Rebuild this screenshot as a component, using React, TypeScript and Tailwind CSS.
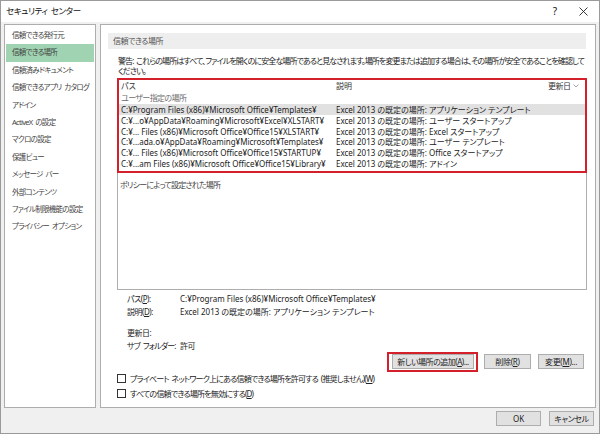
const sideItems = [
  "信頼できる発行元",
  "信頼できる場所",
  "信頼済みドキュメント",
  "信頼できるアプリ カタログ",
  "アドイン",
  "ActiveX の設定",
  "マクロの設定",
  "保護ビュー",
  "メッセージ バー",
  "外部コンテンツ",
  "ファイル制限機能の設定",
  "プライバシー オプション",
];

const rows = [
  ["C:¥Program Files (x86)¥Microsoft Office¥Templates¥", "Excel 2013 の既定の場所: アプリケーション テンプレート"],
  ["C:¥...o¥AppData¥Roaming¥Microsoft¥Excel¥XLSTART¥", "Excel 2013 の既定の場所: ユーザー スタートアップ"],
  ["C:¥... Files (x86)¥Microsoft Office¥Office15¥XLSTART¥", "Excel 2013 の既定の場所: Excel スタートアップ"],
  ["C:¥...ada.o¥AppData¥Roaming¥Microsoft¥Templates¥", "Excel 2013 の既定の場所: ユーザー テンプレート"],
  ["C:¥... Files (x86)¥Microsoft Office¥Office15¥STARTUP¥", "Excel 2013 の既定の場所: Office スタートアップ"],
  ["C:¥...am Files (x86)¥Microsoft Office¥Office15¥Library¥", "Excel 2013 の既定の場所: アドイン"],
];

function Btn({ children, className }: { children: React.ReactNode; className?: string }) {
  return (
    <div
      className={
        "h-[15px] shrink-0 flex items-center justify-center bg-[#e1e1e1] border border-[#adadad] text-[8px] leading-none whitespace-nowrap text-[#222] " +
        (className ?? "")
      }
    >
      {children}
    </div>
  );
}

function Check({ children }: { children: React.ReactNode }) {
  return (
    <div className="h-[15px] flex items-center gap-[4px] whitespace-nowrap">
      <div className="w-[9px] h-[9px] shrink-0 bg-white border border-[#333]" />
      <span className="tracking-[-0.8px] [word-spacing:1.5px]">{children}</span>
    </div>
  );
}

export default function App() {
  return (
    <div className="w-[600px] h-[434px] bg-[#f0f0f0] border border-[#9a9a9a] flex flex-col overflow-hidden text-[8px] text-[#333] font-['Noto_Sans','Noto_Sans_CJK_JP',sans-serif] [font-feature-settings:'palt']">
      {/* title bar */}
      <div className="h-[21px] shrink-0 bg-white flex items-center pl-[5px] pr-[10px] text-[#111]">
        <span className="text-[8.5px] tracking-[-0.4px] [word-spacing:1.5px]">セキュリティ センター</span>
        <span className="ml-auto text-[10px] mr-[22px]">?</span>
        <svg width="9" height="9" viewBox="0 0 9 9" className="mr-[1px]">
          <path d="M0.5 0.5 L8.5 8.5 M8.5 0.5 L0.5 8.5" stroke="#222" strokeWidth="0.9" />
        </svg>
      </div>

      <div className="flex gap-[4px] px-[3px] pt-[2px] shrink-0">
        {/* sidebar */}
        <div className="w-[92px] h-[384px] bg-white border border-[#adadad] p-[1px] pt-[2px]">
          {sideItems.map((s, i) => (
            <div
              key={s}
              className={
                "h-[17.4px] flex items-center pl-[6px] whitespace-nowrap text-[7.5px] tracking-[-0.7px] [word-spacing:1.5px] text-[#444] " +
                (i === 1 ? "bg-[#9fd3b1]" : "")
              }
            >
              {s}
            </div>
          ))}
        </div>

        {/* main panel */}
        <div className="w-[496px] h-[384px] bg-white border border-[#adadad] pt-[8px] pl-[7px] pr-[9px] flex flex-col">
          <div className="h-[16px] shrink-0 bg-[#eeeeee] flex items-center pl-[5px] tracking-[-0.5px] text-[#555]">
            信頼できる場所
          </div>

          <div className="mt-[7px] ml-[10px] shrink-0 leading-[10px] tracking-[-0.9px] [word-spacing:1.5px] text-[#222]">
            <div className="whitespace-nowrap">
              警告: これらの場所はすべて、ファイルを開くのに安全な場所であると見なされます。場所を変更または追加する場合は、その場所が安全であることを確認して
            </div>
            <div>ください。</div>
          </div>

          {/* list */}
          <div className="relative shrink-0 mt-[2px] ml-[9px] w-[470px] h-[212px] border border-[#adadad] bg-white">
            <div className="grid grid-cols-[215px_212px_1fr] h-[13px] items-center text-[#333]">
              <span className="pl-[3px]">パス</span>
              <span className="pl-[3px]">説明</span>
              <span className="pl-[3px] flex items-center tracking-[-0.5px]">
                更新日
                <svg width="6" height="4" viewBox="0 0 6 4" className="ml-auto mr-[7px]">
                  <path d="M0.5 0.5 L3 3 L5.5 0.5" fill="none" stroke="#9a9a9a" strokeWidth="0.9" />
                </svg>
              </span>
            </div>
            <div className="h-[12px] flex items-center pl-[3px] tracking-[-0.6px] text-[#6e6e6e]">ユーザー指定の場所</div>
            {rows.map(([p, d], i) => (
              <div
                key={p}
                className={
                  "grid grid-cols-[215px_212px_1fr] h-[10.8px] items-center whitespace-nowrap text-[#222] " +
                  (i === 0 ? "bg-[#e1e1e1]" : "")
                }
              >
                <span className="pl-[3px]">{p}</span>
                <span className="pl-[3px]">{d}</span>
                <span />
              </div>
            ))}
            <div className="mt-[11px] pl-[2px] leading-[10px] tracking-[-0.8px] text-[#444]">
              ポリシーによって設定された場所
            </div>

            <div className="absolute left-[-1px] top-[-1px] right-[-1px] h-[95px] border-2 border-[#d4202b]" />
          </div>

          {/* details */}
          <div className="shrink-0 ml-[19px] mt-[2px] leading-[13px] whitespace-nowrap text-[#222]">
            <div className="flex">
              <span className="w-[53px] tracking-[-0.5px]">
                パス(<span className="underline">P</span>):
              </span>
              <span>C:¥Program Files (x86)¥Microsoft Office¥Templates¥</span>
            </div>
            <div className="flex">
              <span className="w-[53px] tracking-[-0.5px]">
                説明(<span className="underline">D</span>):
              </span>
              <span>Excel 2013 の既定の場所: アプリケーション テンプレート</span>
            </div>
            <div className="flex mt-[8px]">
              <span className="w-[53px] tracking-[-0.5px]">更新日:</span>
            </div>
            <div className="flex">
              <span className="w-[53px] tracking-[-0.8px] [word-spacing:1.5px]">サブ フォルダー:</span>
              <span className="tracking-[-0.5px]">許可</span>
            </div>
          </div>

          <div className="shrink-0 mt-[2px] flex justify-end mr-[2px]">
            <div className="relative">
              <Btn className="w-[82px] tracking-[-0.5px]">
                新しい場所の追加(<span className="underline">A</span>)...
              </Btn>
              <div className="absolute left-[-5px] top-[-2px] right-[-4px] bottom-[-3px] border-2 border-[#d4202b]" />
            </div>
            <Btn className="w-[47px] ml-[10px] tracking-[-0.3px]">
              削除(<span className="underline">R</span>)
            </Btn>
            <Btn className="w-[46px] ml-[7px] tracking-[-0.3px]">
              変更(<span className="underline">M</span>)...
            </Btn>
          </div>

          <div className="shrink-0 mt-[2px] ml-[9px] text-[#222]">
            <Check>
              プライベート ネットワーク上にある信頼できる場所を許可する (推奨しません)(<span className="underline">W</span>)
            </Check>
            <Check>
              すべての信頼できる場所を無効にする(<span className="underline">D</span>)
            </Check>
          </div>
        </div>
      </div>

      {/* bottom buttons */}
      <div className="flex justify-end gap-[8px] pt-[3px] pr-[5px]">
        <Btn className="w-[45px] border-[#0078d7]">OK</Btn>
        <Btn className="w-[45px] tracking-[-0.4px]">キャンセル</Btn>
      </div>
    </div>
  );
}
